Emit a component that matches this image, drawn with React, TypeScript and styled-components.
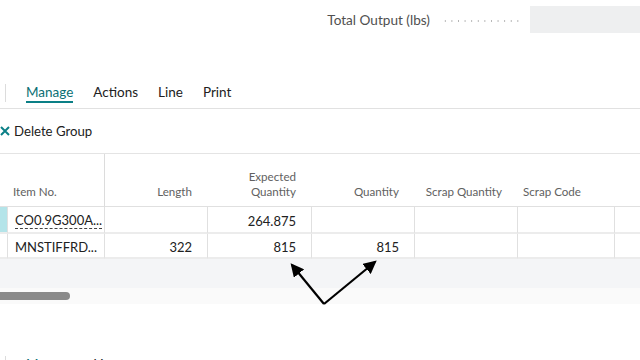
import styled, { createGlobalStyle } from "styled-components";

const GlobalStyle = createGlobalStyle`
  html, body {
    margin: 0;
    padding: 0;
    background: #ffffff;
    overflow: hidden;
  }
  body {
    font-family: "Segoe UI", Lato, "Open Sans", sans-serif;
    color: #212121;
  }
`;

type ColDef = {
  key: string;
  label: string[];
  width: number;
  align: "left" | "right";
};

const columns: ColDef[] = [
  { key: "item", label: ["Item No."], width: 97, align: "left" },
  { key: "length", label: ["Length"], width: 103, align: "right" },
  { key: "expected", label: ["Expected", "Quantity"], width: 104, align: "right" },
  { key: "qty", label: ["Quantity"], width: 103, align: "right" },
  { key: "scrapQty", label: ["Scrap Quantity"], width: 103, align: "right" },
  { key: "scrapCode", label: ["Scrap Code"], width: 97, align: "left" },
  { key: "more", label: [""], width: 60, align: "left" },
];

const rows = [
  { selected: true, item: "CO0.9G300A...", link: true, length: "", expected: "264.875", qty: "" },
  { selected: false, item: "MNSTIFFRD...", link: false, length: "322", expected: "815", qty: "815" },
];

const Page = styled.div`
  position: relative;
  width: 640px;
  height: 360px;
  overflow: hidden;
`;

const TopBar = styled.div`
  display: flex;
  justify-content: flex-end;
  align-items: center;
  height: 39px;
`;

const FieldLabel = styled.span`
  font-size: 13.6px;
  color: #505050;
  margin-right: 12px;
`;

const Dots = styled.span`
  width: 81px;
  height: 2px;
  margin-right: 7px;
  margin-top: 2px;
  background-image: radial-gradient(circle, #b4b4b4 0.8px, transparent 1px);
  background-size: 6.6px 2px;
  background-repeat: repeat-x;
`;

const FieldBox = styled.div`
  width: 110px;
  height: 27px;
  background: #eeeff0;
`;

const TabBar = styled.div<{ $top: number }>`
  display: flex;
  align-items: center;
  height: 30px;
  margin-top: ${(p) => p.$top}px;
  padding-left: 5px;
  border-bottom: 1px solid #e1e1e1;
`;

const TabDivider = styled.div`
  width: 1px;
  height: 18px;
  background: #dcdcdc;
  margin-right: 20px;
`;

const Tab = styled.span<{ $active?: boolean }>`
  font-size: 13.5px;
  color: ${(p) => (p.$active ? "#0b6f74" : "#212121")};
  margin-right: 20px;
  padding-bottom: 1px;
  border-bottom: 2px solid ${(p) => (p.$active ? "#0b7f86" : "transparent")};
`;

const ActionBar = styled.div`
  display: flex;
  align-items: center;
  height: 44px;
  font-size: 13.2px;
  color: #212121;
`;

const XIcon = styled.svg`
  width: 10px;
  height: 10px;
  margin: 0 4px 0 0;
`;

const Table = styled.div`
  border-top: 1px solid #e4e4e4;
`;

const Row = styled.div<{ $h: number }>`
  display: flex;
  height: ${(p) => p.$h}px;
`;

const Accent = styled.div<{ $on?: boolean; $header?: boolean }>`
  width: 8px;
  flex: none;
  background: ${(p) => (p.$on ? "#b4e4e9" : "#ffffff")};
  border-right: ${(p) => (p.$header ? "none" : "1px solid #e0e0e0")};
  border-bottom: ${(p) => (p.$header ? "1px solid #e0e0e0" : "2px solid #ececec")};
  box-sizing: border-box;
`;

const HeadCell = styled.div<{ $w: number; $align: string; $divider?: boolean }>`
  width: ${(p) => p.$w}px;
  flex: none;
  box-sizing: border-box;
  display: flex;
  flex-direction: column;
  justify-content: flex-end;
  align-items: ${(p) => (p.$align === "right" ? "flex-end" : "flex-start")};
  padding: 0 ${(p) => (p.$align === "right" ? 16 : 4)}px 7px 5px;
  border-bottom: 1px solid #e0e0e0;
  border-right: ${(p) => (p.$divider ? "1px solid #dcdcdc" : "none")};
  font-size: 11.6px;
  line-height: 15px;
  color: #616161;
  text-align: ${(p) => p.$align};
`;

const Cell = styled.div<{ $w: number; $align: string }>`
  width: ${(p) => p.$w}px;
  flex: none;
  box-sizing: border-box;
  display: flex;
  align-items: center;
  justify-content: ${(p) => (p.$align === "right" ? "flex-end" : "flex-start")};
  padding: 2px ${(p) => (p.$align === "right" ? 15 : 7)}px 0 7px;
  border-right: 1px solid #e0e0e0;
  border-bottom: 2px solid #ececec;
  font-size: 13px;
  color: #212121;
  white-space: nowrap;
`;

const LinkText = styled.span`
  border-bottom: 1px dashed #444;
  line-height: 15px;
`;

const GrayBand = styled.div`
  height: 29px;
  background: #f4f5f7;
`;

const ScrollTrack = styled.div`
  height: 16px;
  background: #fafafa;
  display: flex;
  align-items: center;
`;

const ScrollThumb = styled.div`
  width: 70px;
  height: 8px;
  border-radius: 0 4px 4px 0;
  background: #8a8a8a;
`;

const Arrows = styled.svg`
  position: absolute;
  left: 0;
  top: 0;
  pointer-events: none;
`;

export default function App() {
  return (
    <Page>
      <GlobalStyle />
      <TopBar>
        <FieldLabel>Total Output (lbs)</FieldLabel>
        <Dots />
        <FieldBox />
      </TopBar>

      <TabBar $top={39}>
        <TabDivider />
        <Tab $active>Manage</Tab>
        <Tab>Actions</Tab>
        <Tab>Line</Tab>
        <Tab>Print</Tab>
      </TabBar>

      <ActionBar>
        <XIcon viewBox="0 0 10 10">
          <path d="M1 1 L9 9 M9 1 L1 9" stroke="#0b7f86" strokeWidth="2" />
        </XIcon>
        Delete Group
      </ActionBar>

      <Table>
        <Row $h={53}>
          <Accent $header />
          {columns.map((c) => (
            <HeadCell key={c.key} $w={c.width} $align={c.align} $divider={c.key === "item"}>
              {c.label.map((l) => (
                <span key={l}>{l}</span>
              ))}
            </HeadCell>
          ))}
        </Row>
        {rows.map((r, i) => (
          <Row $h={i === 0 ? 27 : 25} key={r.item}>
            <Accent $on={r.selected} />
            <Cell $w={97} $align="left">
              {r.link ? <LinkText>{r.item}</LinkText> : r.item}
            </Cell>
            <Cell $w={103} $align="right">{r.length}</Cell>
            <Cell $w={104} $align="right">{r.expected}</Cell>
            <Cell $w={103} $align="right">{r.qty}</Cell>
            <Cell $w={103} $align="right" />
            <Cell $w={97} $align="left" />
            <Cell $w={60} $align="left" />
          </Row>
        ))}
      </Table>
      <GrayBand />
      <ScrollTrack>
        <ScrollThumb />
      </ScrollTrack>

      <TabBar $top={46}>
        <TabDivider />
        <Tab $active>Manage</Tab>
        <Tab>Line</Tab>
      </TabBar>

      <Arrows width="640" height="360" viewBox="0 0 640 360">
        <defs>
          <marker id="head" markerWidth="6" markerHeight="6" refX="5" refY="3" orient="auto" markerUnits="strokeWidth">
            <path d="M0 0 L6 3 L0 6 Z" fill="#000" />
          </marker>
        </defs>
        <path d="M324 304 L292 265" stroke="#000" strokeWidth="2.2" fill="none" markerEnd="url(#head)" />
        <path d="M324 304 L375 262" stroke="#000" strokeWidth="2.2" fill="none" markerEnd="url(#head)" />
      </Arrows>
    </Page>
  );
}
